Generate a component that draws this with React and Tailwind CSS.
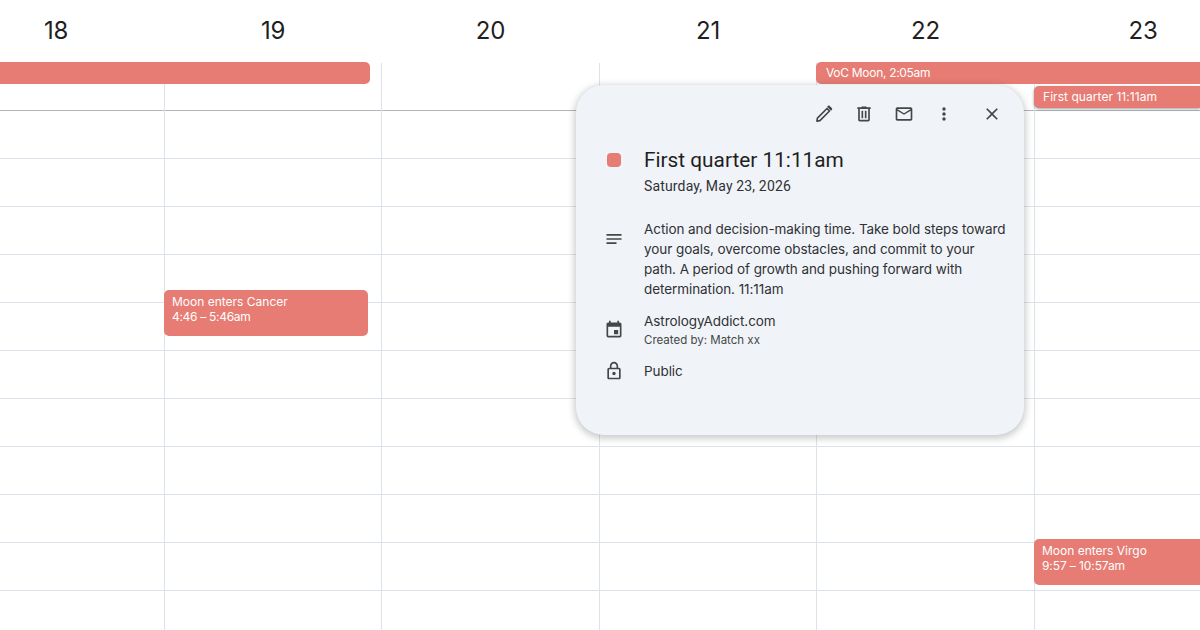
import React from "react";
import { MdMailOutline, MdMoreVert, MdClose, MdNotes, MdEvent, MdOutlineLock } from "react-icons/md";

const days = [18, 19, 20, 21, 22, 23];
const rows = Array.from({ length: 11 });

function PencilIcon({ size }) {
  return (
    <svg width={size} height={size} viewBox="0 0 24 24" fill="none">
      <path d="M3.5 20.5l.6-3.6L15.6 5.4l3 3L7.1 19.9z" stroke="currentColor" strokeWidth="2" strokeLinejoin="round" />
      <path d="M15.6 3.4l1.4-1.2c.5-.4 1.1-.4 1.6 0l3 3c.4.5.4 1.1 0 1.6l-1.2 1.4z" fill="currentColor" />
    </svg>
  );
}

function TrashIcon({ size }) {
  return (
    <svg width={size} height={size} viewBox="0 -960 960 960" fill="currentColor">
      <path d="M280-120q-33 0-56.5-23.5T200-200v-520h-40v-80h200v-40h240v40h200v80h-40v520q0 33-23.5 56.5T680-120H280Zm400-600H280v520h400v-520ZM360-280h80v-360h-80v360Zm160 0h80v-360h-80v360ZM280-720v520-520Z" />
    </svg>
  );
}

function Event({ className, title, time, timeClassName }) {
  return (
    <div className={"absolute bg-[#e67c73] text-white text-xs font-[Inter,sans-serif] " + className}>
      <p className="whitespace-nowrap">{title}</p>
      {time && <p className={"whitespace-nowrap " + timeClassName}>{time}</p>}
    </div>
  );
}

function ToolButton({ icon: Icon, className }) {
  return (
    <button className={"flex items-center justify-center w-10 h-10 text-[#444746] " + className}>
      <Icon size={20} />
    </button>
  );
}

function Popup() {
  return (
    <div className="absolute left-[576px] top-[85px] w-[448px] h-[350px] rounded-[28px] bg-[#f0f4f9] shadow-[0_2px_6px_2px_rgba(60,64,67,0.25)] pt-[9px] text-[#1f1f1f] font-[Inter,sans-serif]">
      <div className="flex justify-end pr-3">
        <ToolButton icon={PencilIcon} />
        <ToolButton icon={TrashIcon} />
        <ToolButton icon={MdMailOutline} />
        <ToolButton icon={MdMoreVert} className="mr-2" />
        <ToolButton icon={MdClose} />
      </div>
      <div className="flex mt-[12px]">
        <div className="w-[68px] pl-[31px] pt-[7px] shrink-0">
          <div className="w-[14px] h-[14px] rounded-[4px] bg-[#e67c73]"></div>
        </div>
        <div>
          <h1 className="text-[20.8px] leading-7 font-[Roboto,sans-serif] text-[#1f1f1f]">First quarter 11:11am</h1>
          <p className="text-sm leading-5 mt-[2px] tracking-[0.15px] text-[#303134] font-[Roboto,sans-serif]">Saturday, May 23, 2026</p>
        </div>
      </div>
      <div className="flex mt-[23px]">
        <div className="w-[68px] pl-[28px] pt-[10px] shrink-0 text-[#444746]">
          <MdNotes size={20} />
        </div>
        <p className="w-[364px] text-[13.5px] leading-5 tracking-[-0.07px] text-[#303134]">
          Action and decision-making time. Take bold steps toward your goals, overcome obstacles, and commit to your path. A period of growth and pushing forward with determination. 11:11am
        </p>
      </div>
      <div className="flex mt-[12px]">
        <div className="w-[68px] pl-[28px] pt-[9px] shrink-0 text-[#444746]">
          <MdEvent size={20} />
        </div>
        <div>
          <p className="text-[13.5px] leading-5 tracking-[-0.07px] text-[#303134]">AstrologyAddict.com</p>
          <p className="text-[11.5px] leading-4 mt-[1px] text-[#444746]">Created by: Match xx</p>
        </div>
      </div>
      <div className="flex mt-[13px]">
        <div className="w-[68px] pl-[28px] pt-[0px] shrink-0 text-[#444746]">
          <MdOutlineLock size={20} />
        </div>
        <p className="text-[13.5px] leading-5 tracking-[-0.07px] text-[#303134]">Public</p>
      </div>
    </div>
  );
}

export default function App() {
  return (
    <div className="relative w-[1200px] h-[630px] overflow-hidden bg-white">
      <div className="w-[1304px] -ml-[53px]">
        <div className="grid grid-cols-[217px_217px_218px_217px_218px_217px] h-[63px]">
          {days.map((d) => (
            <div key={d} className="flex justify-center pl-px pt-[15px] text-[24px] leading-8 tracking-[-0.25px] text-[#1f1f1f] font-[Inter,sans-serif]">
              {d}
            </div>
          ))}
        </div>
        <div className="grid grid-cols-[217px_217px_218px_217px_218px_217px]">
          {days.map((d) => (
            <div key={d} className="border-l border-[#dde3ea]">
              <div className="h-12 border-b border-[#b1b5ba]"></div>
              {rows.map((_, i) => (
                <div key={i} className="h-12 border-b border-[#dde3ea]"></div>
              ))}
            </div>
          ))}
        </div>
      </div>

      <Event className="left-0 top-[62px] w-[370px] h-[22px] rounded-r-[5px]" title="" />
      <Event className="left-[816px] top-[62px] w-[384px] h-[22px] rounded-l-[5px] pl-[10px] leading-[22px] tracking-[-0.3px]" title="VoC Moon, 2:05am" />
      <Popup />
      <Event className="left-[1034px] top-[86px] w-[166px] h-[22px] rounded-l-[5px] pl-[9px] leading-[22px] tracking-[0.05px] shadow-[0_1px_3px_rgba(60,64,67,0.5)]" title="First quarter 11:11am" />
      <Event className="left-[164px] top-[290px] w-[204px] h-[46px] rounded-[5px] pl-2 pt-[4px] leading-[15px]" title="Moon enters Cancer" time="4:46 – 5:46am" timeClassName="tracking-[-0.3px]" />
      <Event className="left-[1034px] top-[539px] w-[166px] h-[46px] rounded-l-[5px] pl-2 pt-[4px] leading-[15px]" title="Moon enters Virgo" time="9:57 – 10:57am" timeClassName="tracking-[-0.1px]" />
    </div>
  );
}
